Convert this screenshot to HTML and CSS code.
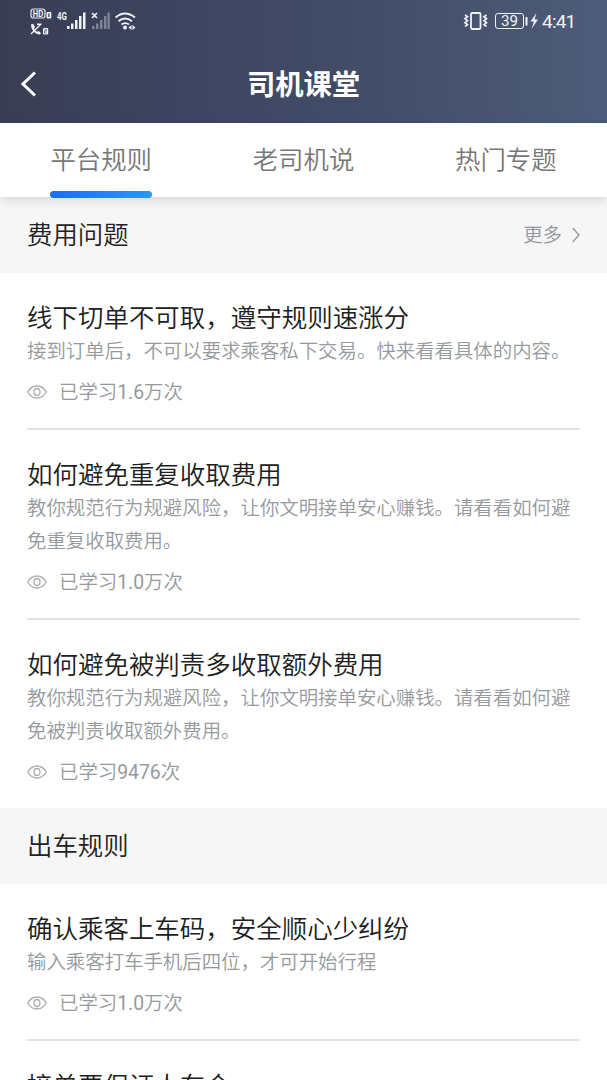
FILE: index.html
```html
<!DOCTYPE html>
<html lang="zh-CN">
<head>
<meta charset="utf-8">
<title>司机课堂</title>
<link rel="stylesheet" href="styles.css">
</head>
<body>
<svg class="defs" width="0" height="0">
  <symbol id="eye" viewBox="0 0 20 14"><path d="M.7 7C3 3 6.400 1 10 1s7 2 9.300 6C17 11 13.600 13 10 13S3 11 .7 7Z"/><ellipse cx="10" cy="7" rx="3" ry="3.500"/></symbol>
</svg>
<div class="screen">
  <header class="header">
    <div class="status">
      <svg class="status-left" width="112" height="30" viewBox="28 6 112 30">
        <rect x="31" y="9" width="14" height="9" rx="2.500" fill="none" stroke="#e4e7ef" stroke-width="1.200"/>
        <text x="32.800" y="16.600" font-size="8.500" font-weight="700" textLength="10.500" lengthAdjust="spacingAndGlyphs">HD</text>
        <rect x="46.500" y="12" width="4.800" height="6.500" rx="1"/>
        <path d="M48.200 13.500h1.300v3.500h-1.300Z" fill="#3d4662"/>
        <path d="M31 24.500l2.200-.8 1.800 3.300-1 1.500 3 3.200 1.800-.8 2.200 2.300-1.200 1.300c-4.500 0-9-5-8.800-10Z"/>
        <path d="M31 34l9.500-9.500M37 24.300h4.500" stroke="#f0f2f7" stroke-width="1.400"/>
        <rect x="43" y="28" width="5.200" height="6.500" rx="1"/>
        <path d="M44.500 29.500h2v1.500h-2v2h2" fill="none" stroke="#3d4662" stroke-width=".7"/>
        <text x="57" y="20" font-size="10.500" font-weight="700" textLength="10" lengthAdjust="spacingAndGlyphs">4G</text>
        <path d="M67 26h2.500v3H67ZM71 23.500h2.500V29H71ZM75 20h2.500v9H75ZM79 16h2.500v13H79ZM83 12.500h2.500V29H83Z"/>
        <path d="M92 26h2.500v3H92ZM96 23.500h2.500V29H96ZM100 20h2.500v9H100ZM104 16h2.500v13H104ZM107.500 12.500h2.300V29h-2.300Z" opacity=".38"/>
        <path d="M92 13l5 5M97 13l-5 5" stroke="#f0f2f7" stroke-width="1.700"/>
        <g fill="none" stroke="#f0f2f7" stroke-width="1.900"><path d="M115.500 17.500q9.500-8 19.500 0M118.500 21.300q6.500-5.400 13.500 0M121.500 24.500q3.700-2.800 7.500 0"/></g>
        <circle cx="125" cy="27.600" r="2"/>
        <path d="M131.500 25v5l-3-2.500ZM132.500 25v5l3-2.500Z"/>
      </svg>
      <div class="status-right">
        <svg width="78" height="30" viewBox="462 6 78 30">
          <g fill="none" stroke="#f0f2f7"><rect x="471" y="13" width="9.500" height="16" rx="1.200" stroke-width="1.800"/><path d="M465 15l2.500 1.700-2.500 2 2.500 2-2.500 2 2.500 2-2.500 1.800M486.500 15L484 16.700l2.500 2-2.500 2 2.500 2-2.500 2 2.500 1.800" stroke-width="1.700"/><rect x="495.500" y="13.500" width="28" height="15" rx="2.500" stroke-width="1"/></g>
          <rect x="525.500" y="17" width="2" height="8.500"/>
          <path d="M536.500 13l-6 8.500h3.500l-2.500 7.500 6.500-9.500h-3.500Z"/>
          <text x="501" y="26.200" font-size="14.500" textLength="17" lengthAdjust="spacingAndGlyphs">39</text>
        </svg>
        <span class="clock">4:41</span>
      </div>
    </div>
    <div class="titlebar">
      <svg class="back" width="18" height="28" viewBox="0 0 18 28"><path d="M15 2.500L3 14l12 11.500"/></svg>
      <h1 class="page-title">司机课堂</h1>
    </div>
  </header>
  <nav class="tabs">
    <div class="tab"><span class="tab-label tab-active">平台规则</span></div>
    <div class="tab"><span class="tab-label">老司机说</span></div>
    <div class="tab"><span class="tab-label">热门专题</span></div>
  </nav>
  <section>
    <div class="section-head"><h2 class="section-title">费用问题</h2><div class="more"><span class="more-label">更多</span><svg width="8" height="16" viewBox="0 0 8 16"><path d="M.7 1L7 8 .7 15"/></svg></div></div>
    <article class="lesson"><h3 class="lesson-title">线下切单不可取，遵守规则速涨分</h3><p class="desc">接到订单后，不可以要求乘客私下交易。快来看看具体的内容。</p><div class="views"><svg class="eye"><use href="#eye"/></svg><span class="views-label">已学习<span class="num">1.6</span>万次</span></div></article>
    <article class="lesson"><h3 class="lesson-title">如何避免重复收取费用</h3><p class="desc">教你规范行为规避风险，让你文明接单安心赚钱。请看看如何避免重复收取费用。</p><div class="views"><svg class="eye"><use href="#eye"/></svg><span class="views-label">已学习<span class="num">1.0</span>万次</span></div></article>
    <article class="lesson lesson-last"><h3 class="lesson-title">如何避免被判责多收取额外费用</h3><p class="desc">教你规范行为规避风险，让你文明接单安心赚钱。请看看如何避免被判责收取额外费用。</p><div class="views"><svg class="eye"><use href="#eye"/></svg><span class="views-label">已学习<span class="num">9476</span>次</span></div></article>
  </section>
  <section>
    <div class="section-head"><h2 class="section-title">出车规则</h2></div>
    <article class="lesson"><h3 class="lesson-title">确认乘客上车码，安全顺心少纠纷</h3><p class="desc">输入乘客打车手机后四位，才可开始行程</p><div class="views"><svg class="eye"><use href="#eye"/></svg><span class="views-label">已学习<span class="num">1.0</span>万次</span></div></article>
    <article class="lesson"><h3 class="lesson-title">接单要保证人车合</h3></article>
  </section>
</div>
</body>
</html>
```
FILE: styles.css
```css
* { box-sizing: border-box; }
body { margin: 0; background: #fff; font-family: Roboto, "Noto Sans CJK SC", sans-serif; font-weight: 350; }
h1, h2, h3, p { margin: 0; font-weight: 350; }
.defs { display: block; }
.screen { width: 607px; height: 1080px; overflow: hidden; background: #fff; }
.header { height: 123px; background: linear-gradient(90deg, #393e54, #3c435e 25%, #434d68 60%, #4d5c79); color: #fff; }
.status { height: 45px; padding: 6px 30px 0 28px; display: flex; justify-content: space-between; fill: #f0f2f7; color: #f0f2f7; font-weight: 400; }
.status-right { display: flex; align-items: flex-start; }
.clock { font-size: 19px; line-height: 32px; width: 35px; margin-left: 2px; letter-spacing: -0.8px; white-space: nowrap; }
.titlebar { height: 78px; display: grid; grid-template-columns: 60px 1fr 60px; align-items: center; }
.back { margin-left: 20px; fill: none; stroke: #fff; stroke-width: 3; }
.page-title { font-size: 28.3px; font-weight: 700; text-align: center; line-height: 42px; padding-top: 4px; }
.tabs { position: relative; height: 74px; display: grid; grid-template-columns: repeat(3, 1fr); background: #fff; box-shadow: 0 3px 9px rgba(0, 0, 0, .13); }
.tab { display: flex; justify-content: center; }
.tab-label { height: 74.5px; display: flex; flex-direction: column; justify-content: space-between; line-height: 74px; font-size: 25.4px; color: #777; }
.tab-active::after { content: ""; height: 7px; margin-top: -6.5px; flex: none; border-radius: 4px; background: linear-gradient(90deg, #1970ec, #2997fb); }
.section-head { height: 76px; padding: 0 27px; display: flex; align-items: center; justify-content: space-between; background: #f6f6f6; }
.section-title { font-size: 25.4px; line-height: 76px; color: #222; }
.more { display: flex; align-items: center; gap: 10px; font-size: 19.4px; color: #92959a; }
.more-label { padding-bottom: 3px; }
.more svg { fill: none; stroke: #92959a; stroke-width: 1.3; }
.lesson { margin: 0 27px; padding-top: 29px; border-bottom: 2px solid #e3e3e5; padding-bottom: 20px; }
.lesson-last { border-bottom: 0; }
.lesson-title { font-size: 25.47px; line-height: 33px; color: #202020; white-space: nowrap; }
.desc { width: 560px; font-size: 19.42px; line-height: 33px; color: #96999d; }
.views { display: flex; align-items: center; margin-top: 7px; height: 33px; gap: 12px; font-size: 19.4px; color: #96999d; }
.views-label { padding-bottom: 2px; }
.num { font-weight: 400; }
.eye { width: 20px; height: 14px; fill: none; stroke: #acadb0; stroke-width: 1.3; }
```
